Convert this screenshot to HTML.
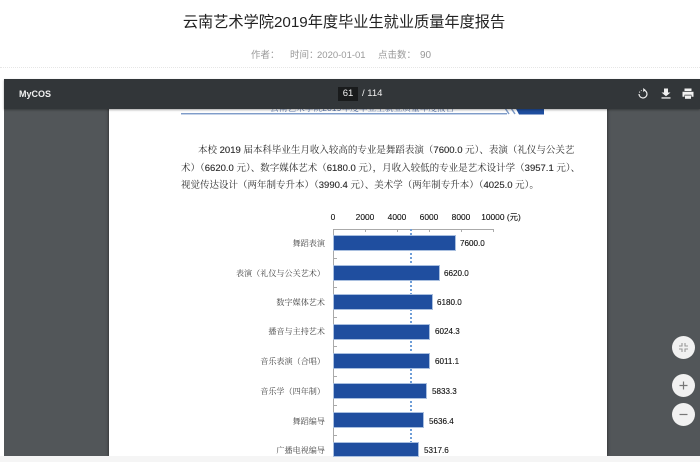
<!DOCTYPE html>
<html lang="zh"><head><meta charset="utf-8"><title>云南艺术学院2019年度毕业生就业质量年度报告</title>
<style>
html,body{margin:0;padding:0;background:#fff}
#w{position:relative;width:700px;height:462px;overflow:hidden;background:#fff;font-family:"Liberation Sans","Noto Sans CJK SC",sans-serif;filter:blur(.35px)}
.a{position:absolute;white-space:nowrap}
.p{font-family:"Liberation Sans","Noto Serif CJK SC",serif;font-size:9.5px;color:#2a2a2a;line-height:14px;height:14px;text-align:justify;text-align-last:justify}
.p b{font-weight:normal;-webkit-text-stroke:.12px #222}
.t{font-size:8.4px;color:#111;line-height:12px;transform:translateX(-50%);-webkit-text-stroke:.1px #111}
.l{font-family:"Liberation Sans","Noto Serif CJK SC",serif;font-size:8.1px;color:#444;right:375px;line-height:12px}
.v{font-size:8.1px;color:#111;line-height:12px;-webkit-text-stroke:.12px #111}
.b{position:absolute;left:334px;height:14px;background:#1f4e9f;box-shadow:0 0 0 1px #a9bfdf}
.k{position:absolute;background:#aaa}
.c{position:absolute;left:672px;width:23px;height:23px;border-radius:50%;background:#f1f1f1}
.m{top:48px;font-size:9.5px;line-height:15px;color:#999}
</style></head><body><div id="w">
<div class="a" style="left:0;right:0;top:11px;text-align:center;font-size:15.2px;line-height:24px;color:#222;padding-right:12px">云南艺术学院2019年度毕业生就业质量年度报告</div>
<div class="a m" style="left:251px">作者：</div>
<div class="a m" style="left:290px">时间：</div>
<div class="a m" style="left:317px">2020-01-01</div>
<div class="a m" style="left:378px">点击数：</div>
<div class="a m" style="left:420px;font-size:10px">90</div>
<div class="a" style="left:0;right:0;top:67px;border-top:1px dotted #e6e6e6"></div>

<div class="a" style="left:4px;right:0;top:79px;height:377px;background:#525659;overflow:hidden">
  <div class="a" style="left:105px;top:0;width:498px;height:377px;background:#fff;box-shadow:0 0 3px #222"></div>
</div>
<div class="a" style="left:0;right:0;top:456px;height:6px;background:#f5f5f5"></div>

<div class="a" style="left:270px;top:101px;font-family:'Liberation Sans','Noto Serif CJK SC',serif;font-size:8.7px;line-height:14px;color:#5b76a8">云南艺术学院2019年度毕业生就业质量年度报告</div>
<div class="a" style="left:181px;top:113px;width:326px;height:1px;background:#7f9cc9;box-shadow:0 1px 0 #c5d3e8"></div>
<svg class="a" style="left:500px;top:105px" width="46" height="10"><path d="M3 0L9 9M9 0L15 9" stroke="#7f9cc9" stroke-width="1.5" fill="none"/><path d="M14 0H44V9.500H19Z" fill="#1f4e9f"/></svg>

<div class="a p" style="left:198px;top:144px;width:346px">本校 <b>2019</b> 届本科毕业生月收入较高的专业是舞蹈表演（<b>7600.0</b> 元）、表演（礼仪与公关艺</div>
<div class="a p" style="left:181px;top:162px;width:363px">术）（<b>6620.0</b> 元）、数字媒体艺术（<b>6180.0</b> 元），月收入较低的专业是艺术设计学（<b>3957.1</b> 元）、</div>
<div class="a p" style="left:181px;top:179px;width:322px">视觉传达设计（两年制专升本）（<b>3990.4</b> 元）、美术学（两年制专升本）（<b>4025.0</b> 元）。</div>

<div class="a t" style="left:333px;top:211px">0</div>
<div class="a t" style="left:365px;top:211px">2000</div>
<div class="a t" style="left:397px;top:211px">4000</div>
<div class="a t" style="left:429px;top:211px">6000</div>
<div class="a t" style="left:461px;top:211px">8000</div>
<div class="a t" style="left:493px;top:211px;margin-left:8px;font-family:'Liberation Sans','Noto Sans CJK SC',sans-serif">10000 (元)</div>

<div class="k" style="left:333px;top:229px;width:160px;height:1px"></div>
<div class="k" style="left:333px;top:229px;width:1px;height:227px"></div>
<div class="k" style="left:365px;top:229px;width:1px;height:3px"></div>
<div class="k" style="left:397px;top:229px;width:1px;height:3px"></div>
<div class="k" style="left:429px;top:229px;width:1px;height:3px"></div>
<div class="k" style="left:461px;top:229px;width:1px;height:3px"></div>
<div class="k" style="left:493px;top:229px;width:1px;height:3px"></div>
<div class="k" style="left:334px;top:258px;width:3px;height:1px"></div>
<div class="k" style="left:334px;top:287px;width:3px;height:1px"></div>
<div class="k" style="left:334px;top:317px;width:3px;height:1px"></div>
<div class="k" style="left:334px;top:346px;width:3px;height:1px"></div>
<div class="k" style="left:334px;top:376px;width:3px;height:1px"></div>
<div class="k" style="left:334px;top:405px;width:3px;height:1px"></div>
<div class="k" style="left:334px;top:435px;width:3px;height:1px"></div>

<div class="a" style="left:410px;top:229px;height:227px;width:2px;background:repeating-linear-gradient(to bottom,#6f9ed8 0,#6f9ed8 2px,transparent 2px,transparent 4px)"></div>
<div class="b" style="top:236px;width:121px"></div>
<div class="b" style="top:266px;width:105px"></div>
<div class="b" style="top:295px;width:98px"></div>
<div class="b" style="top:325px;width:95px"></div>
<div class="b" style="top:354px;width:95px"></div>
<div class="b" style="top:384px;width:92px"></div>
<div class="b" style="top:413px;width:89px"></div>
<div class="b" style="top:443px;width:84px;height:13px"></div>

<div class="a l" style="top:237.500px">舞蹈表演</div><div class="a v" style="left:460px;top:238px">7600.0</div>
<div class="a l" style="top:267.500px">表演（礼仪与公关艺术）</div><div class="a v" style="left:444px;top:268px">6620.0</div>
<div class="a l" style="top:296.500px">数字媒体艺术</div><div class="a v" style="left:437px;top:297px">6180.0</div>
<div class="a l" style="top:325.500px">播音与主持艺术</div><div class="a v" style="left:435px;top:326px">6024.3</div>
<div class="a l" style="top:355.500px">音乐表演（合唱）</div><div class="a v" style="left:435px;top:356px">6011.1</div>
<div class="a l" style="top:385.500px">音乐学（四年制）</div><div class="a v" style="left:432px;top:386px">5833.3</div>
<div class="a l" style="top:415.500px">舞蹈编导</div><div class="a v" style="left:429px;top:416px">5636.4</div>
<div class="a l" style="top:444.500px">广播电视编导</div><div class="a v" style="left:424px;top:445px">5317.6</div>

<div class="a" style="left:4px;right:0;top:79px;height:30px;background:#323639;box-shadow:0 1px 2px rgba(0,0,0,.35)"></div>
<div class="a" style="left:19px;top:87px;font-size:9px;line-height:14px;font-weight:bold;color:#f1f1f1">MyCOS</div>
<div class="a" style="left:338px;top:87px;width:20px;height:14px;background:#191b1c;color:#f1f1f1;font-size:9.5px;line-height:14px;text-align:center">61</div>
<div class="a" style="left:362px;top:87px;font-size:9.5px;line-height:14px;color:#f1f1f1">/ 114</div>
<svg class="a" style="left:636px;top:87px" width="14" height="14" viewBox="0 0 14 14"><path d="M7.500 3A4 4 0 1 1 3 7" fill="none" stroke="#f1f1f1" stroke-width="1.200"/><path d="M3.200 5.500L4 4.700M5 3.700L5.600 3.300" fill="none" stroke="#f1f1f1" stroke-width="1"/><path d="M7.200 1L9.700 3L7.200 5Z" fill="#f1f1f1"/></svg>
<svg class="a" style="left:659px;top:87px" width="14" height="14" viewBox="0 0 14 14"><path d="M5 1.500H9V5.500H11.500L7 9.200L2.500 5.500H5Z" fill="#f1f1f1"/><rect x="2.500" y="10.300" width="9" height="1.300" fill="#f1f1f1"/></svg>
<svg class="a" style="left:681px;top:87px" width="14" height="14" viewBox="0 0 14 14"><rect x="3.500" y="1.500" width="7" height="2.500" fill="#f1f1f1"/><path d="M1.500 4.700H12.500V9.700H10.500V7.700H3.500V9.700H1.500Z" fill="#f1f1f1"/><rect x="4" y="8.500" width="6" height="3.300" fill="#f1f1f1"/></svg>

<div class="c" style="top:336px"><svg width="23" height="23" viewBox="0 0 23 23"><path d="M10 7V10H7M13 7V10H16M10 16V13H7M13 16V13H16" fill="none" stroke="#999" stroke-width="1.100"/></svg></div>
<div class="c" style="top:374px"><svg width="23" height="23" viewBox="0 0 23 23"><path d="M11.500 7.500V15.500M7.500 11.500H15.500" fill="none" stroke="#777" stroke-width="1.200"/></svg></div>
<div class="c" style="top:403px"><svg width="23" height="23" viewBox="0 0 23 23"><path d="M7.500 11.500H15.500" fill="none" stroke="#777" stroke-width="1.200"/></svg></div>
</div></body></html>
